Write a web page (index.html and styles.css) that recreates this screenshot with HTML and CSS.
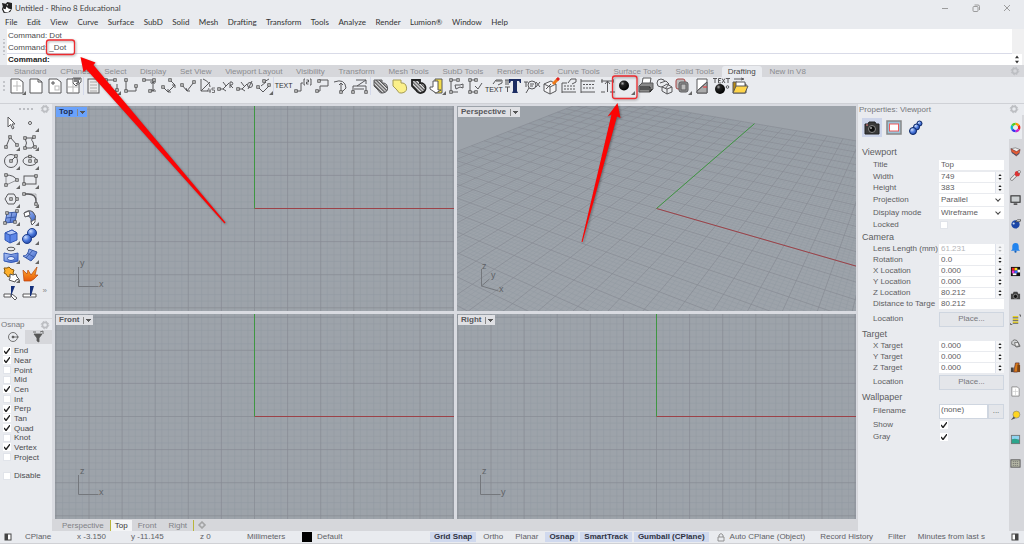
FILE: index.html
```html
<!DOCTYPE html>
<html lang="en">
<head>
<meta charset="utf-8">
<title>Untitled - Rhino 8 Educational</title>
<link rel="stylesheet" href="styles.css">
</head>
<body>
<svg class="defs" width="0" height="0" aria-hidden="true">
  <defs>
    <rect id="n" x="-1.2" y="-1.2" width="2.4" height="2.4" fill="#fff" stroke="#444" stroke-width=".9"/>
    <path id="c" d="M18 14v4h-4z" fill="#666" stroke="none"/>
    <g id="gear"><circle cx="5" cy="5" r="2.6" fill="none" stroke="#bcbec2" stroke-width="1.6"/><circle cx="5" cy="5" r="3.8" fill="none" stroke="#bcbec2" stroke-width="1" stroke-dasharray="1.5 1.5"/></g>
    <g id="spin"><path d="M3 4.2h4L5 1.6zM3 6.8h4L5 9.4z" fill="currentColor"/></g>
    <radialGradient id="ball" cx=".35" cy=".3" r=".7"><stop offset="0" stop-color="#aaa"/><stop offset=".3" stop-color="#222"/><stop offset="1" stop-color="#000"/></radialGradient>
    <radialGradient id="blue" cx=".35" cy=".3" r=".8"><stop offset="0" stop-color="#cfe0ff"/><stop offset=".5" stop-color="#4c79dc"/><stop offset="1" stop-color="#1a3f9e"/></radialGradient>
    <linearGradient id="bl" x2="1" y2="1"><stop offset="0" stop-color="#b4c9f8"/><stop offset="1" stop-color="#3560c8"/></linearGradient>
    <linearGradient id="fire" y2="1" x2="0"><stop offset="0" stop-color="#ffb52e"/><stop offset="1" stop-color="#e8590c"/></linearGradient>
    <pattern id="hatch" width="2.4" height="2.4" patternUnits="userSpaceOnUse" patternTransform="rotate(45)"><rect width="2.4" height="2.4" fill="#e4e4e6"/><path d="M0 1h2.4" stroke="#444" stroke-width="1.1"/></pattern>
  </defs>
</svg>

<header class="titlebar">
  <svg class="logo" viewBox="0 0 12 12"><path d="M1 1l4 1 2-2 5 1v6l-2 4-7 1-2-4 1-3z" fill="#222"/><path d="M2 7l3 1 1-3 2 2 3 1-3 3-4 0zM6 2l2 1-1 1z" fill="#fff"/></svg>
  <h1>Untitled - Rhino 8 Educational</h1>
  <div class="winbtns">
    <button aria-label="Minimize"><svg viewBox="0 0 10 10"><path d="M2 5.5h6"/></svg></button>
    <button aria-label="Restore"><svg viewBox="0 0 10 10"><rect x="2" y="3.5" width="5" height="5" rx="1"/><path d="M3.5 2h3.5q1.5 0 1.500 1.500V7"/></svg></button>
    <button aria-label="Close"><svg viewBox="0 0 10 10"><path d="M2 2l6 6M8 2L2 8"/></svg></button>
  </div>
</header>
<nav class="menu">
  <a href="#">File</a><a href="#">Edit</a><a href="#">View</a><a href="#">Curve</a><a href="#">Surface</a><a href="#">SubD</a><a href="#">Solid</a><a href="#">Mesh</a><a href="#">Drafting</a><a href="#">Transform</a><a href="#">Tools</a><a href="#">Analyze</a><a href="#">Render</a><a href="#">Lumion®</a><a href="#">Window</a><a href="#">Help</a>
</nav>

<section class="command">
  <div class="grip"></div>
  <div class="cmdbody">
    <div class="history"><p>Command: Dot</p><p>Command: _Dot</p></div>
    <div class="prompt"><label for="cmd">Command:</label><input id="cmd" type="text"></div>
  </div>
  <div class="cmdscroll"><svg viewBox="0 0 10 11"><use href="#spin"/></svg></div>
</section>

<nav class="tabs">
  <div class="tablist">
    <a href="#">Standard</a><a href="#">CPlanes</a><a href="#">Select</a><a href="#">Display</a><a href="#">Set View</a><a href="#">Viewport Layout</a><a href="#">Visibility</a><a href="#">Transform</a><a href="#">Mesh Tools</a><a href="#">SubD Tools</a><a href="#">Render Tools</a><a href="#">Curve Tools</a><a href="#">Surface Tools</a><a href="#">Solid Tools</a><a href="#" class="on">Drafting</a><a href="#">New in V8</a>
  </div>
  <svg class="gear" viewBox="0 0 10 10"><use href="#gear"/></svg>
</nav>

<div class="toolbar">
  <div class="grip"></div>
  <div class="group g1">
    <button aria-label="Layout views"><svg viewBox="0 0 18 18"><path d="M3 2h8l4 3v11H3z" fill="#fff"/><path d="M9 4v10M5 9h8" stroke="#bbb"/><use href="#c"/></svg></button>
    <button aria-label="New layout"><svg viewBox="0 0 18 18"><path d="M3 2h8l4 3v11H3z" fill="#fff"/><path d="M11 2v3h4"/></svg></button>
    <button aria-label="Add detail"><svg viewBox="0 0 18 18"><path d="M3 2h8l4 3v11H3z" fill="#fff"/><path d="M5 6h4M7 4v4"/><rect x="9" y="9" width="4" height="4" stroke="#bbb"/></svg></button>
    <button aria-label="Layout properties"><svg viewBox="0 0 18 18"><path d="M2 2h12v14H2z" fill="#fff"/><path d="M8 6v9M3 10h10" stroke="#bbb"/><path d="M8 1h8v4l-5 4-3-3z" fill="#fff"/><path d="M9 2h6M9 4h5M11 7l3-2" stroke-width="1.500"/></svg></button>
  </div>
  <div class="group g2">
    <button aria-label="Linetype"><svg viewBox="0 0 18 18"><rect x="4" y="2" width="11" height="14" fill="#ececec"/><path d="M6 5h7M6 8h7M6 11h7M6 14h7" stroke="#aaa"/></svg></button>
    <button aria-label="Dimension"><svg viewBox="0 0 18 18"><path d="M3 3h9M7 7v7h7V7"/><use href="#n" x="3" y="3"/><use href="#n" x="12" y="3"/><use href="#n" x="7" y="14"/><use href="#n" x="14" y="13"/><use href="#c"/></svg></button>
    <button aria-label="Ordinate dimension"><svg viewBox="0 0 18 18"><path d="M4 3v11h10V9"/><use href="#n" x="4" y="3"/><use href="#n" x="4" y="14"/><use href="#n" x="14" y="9"/></svg></button>
    <button aria-label="Horizontal dimension"><svg viewBox="0 0 18 18"><path d="M2 3h11M9 5h6M9 14h6M12 5v9M10.500 7L12 5l1.500 2M10.500 12l1.500 2 1.500-2"/><use href="#n" x="3" y="3"/><use href="#n" x="13" y="3"/><use href="#n" x="9" y="14"/></svg></button>
    <button aria-label="Aligned dimension"><svg viewBox="0 0 18 18"><path d="M10 3l5 5-7 7-5-5M12 8l3 0v3M8 12v3h3"/><use href="#n" x="10" y="3"/><use href="#n" x="3" y="10"/></svg></button>
    <button aria-label="Rotated dimension"><svg viewBox="0 0 18 18"><path d="M3 8l5 6 7-9M7 11l1 3h3"/><use href="#n" x="15" y="5"/><use href="#n" x="3" y="8"/></svg></button>
    <button aria-label="Angle dimension"><svg viewBox="0 0 18 18"><path d="M3 2v12h7M3 14L12 5M5 2q7 3 7 8"/><path d="M17 11h-3v2h2.500v2.500H14M11 11l-1.500 3H13M12 12v4" stroke-width=".8"/></svg></button>
    <button aria-label="Radius dimension"><svg viewBox="0 0 18 18"><path d="M2 12h4l6-6M6 5l3 4M6 12l3 2"/><path d="M13 11V5h2q1.500 1.500 0 3h-2l3 3"/><use href="#n" x="2" y="12"/></svg></button>
    <button aria-label="Diameter dimension"><svg viewBox="0 0 18 18"><path d="M2 12h4l5-5M5 5l3 4M6 12l3 2"/><circle cx="14" cy="8" r="2.500"/><path d="M12 12l4-8"/><use href="#n" x="2" y="12"/></svg></button>
    <button aria-label="Edit dimension"><svg viewBox="0 0 18 18"><path d="M3 10l5 5 7-7M9 5l5-3M6 9l5-4"/><use href="#n" x="3" y="10"/><use href="#n" x="9" y="4"/><use href="#n" x="14" y="8"/><use href="#c"/></svg></button>
  </div>
  <div class="group g3">
    <button aria-label="Text" class="txt">TEXT</button>
    <button aria-label="Leader"><svg viewBox="0 0 18 18"><path d="M2 14h5V6h2M11 2h-1v6h1M16 2h1v6h-1M12.500 3h2v2h-2v2h2"/><use href="#n" x="2" y="14"/></svg></button>
    <button aria-label="Annotation"><svg viewBox="0 0 18 18"><path d="M4 14h3V9h8V3H6v2"/><use href="#n" x="4" y="14"/><use href="#n" x="6" y="4"/></svg></button>
    <button aria-label="Arc dimension"><svg viewBox="0 0 18 18"><path d="M2 5q11-4 12 6l-4 4M9 6v9M7 8l2-2 2 2"/><use href="#n" x="9" y="15"/></svg></button>
    <button aria-label="Section"><svg viewBox="0 0 18 18"><path d="M2 15V9h13v6M5 3h10l-9 6M15 3v4M3 12h10"/><use href="#n" x="2" y="15"/><use href="#n" x="15" y="15"/></svg></button>
  </div>
  <div class="group g4">
    <button aria-label="Hatch"><svg viewBox="0 0 18 18"><path d="M3 3h8v3a5 5 0 1 1-4 7L3 9z" fill="url(#hatch)"/></svg></button>
    <button aria-label="Solid hatch"><svg viewBox="0 0 18 18"><path d="M3 3h8v3a5 5 0 1 1-4 7L3 9z" fill="#fbf08a" stroke="#a39a55"/></svg></button>
    <button aria-label="Hatch boundary"><svg viewBox="0 0 18 18"><path d="M3 3h8v3a5 5 0 1 1-4 7L3 9z" fill="url(#hatch)" stroke-width="1.800" stroke="#222"/></svg></button>
    <button aria-label="Make 2D"><svg viewBox="0 0 18 18"><path d="M7 2h7v14H7z" fill="#f3dc4a"/><path d="M2 10h3V4h5v9h3l-5 3-6-4z" fill="#fff"/><use href="#c"/></svg></button>
    <button aria-label="Match dimension"><svg viewBox="0 0 18 18"><path d="M3 3h6M3 15h8M4 3v12M8 8h5l3-1v4l-3-1-4 2z"/><use href="#n" x="4" y="3"/><use href="#n" x="4" y="15"/><use href="#n" x="11" y="3"/></svg></button>
    <button aria-label="Check dimension"><svg viewBox="0 0 18 18"><path d="M4 3v12h6M4 3h6"/><path d="M9 9l3 3 4-6"/><use href="#n" x="4" y="3"/><use href="#n" x="4" y="15"/><use href="#n" x="10" y="3"/><use href="#n" x="10" y="15"/></svg></button>
    <button aria-label="Edit text" class="txt low"><svg viewBox="0 0 18 8"><path d="M8 6l3-4h6v3l-4 2M11 3h5"/></svg>TEXT</button>
    <button aria-label="Text style"><svg viewBox="0 0 18 18"><path d="M5 2h12v4h-1l-1-2h-2v10l1 2H8l1-2V4H7L6 6H5z" fill="#1c2d63" stroke="none"/><path d="M1 3h4M2 3v5M4 3v5M1 10h5M3.500 10v5"/></svg></button>
    <button aria-label="Find text"><svg viewBox="0 0 18 18"><circle cx="9" cy="8" r="4"/><path d="M6 11l-3 5M1 5h4M3 5v5M13 5l4 5M17 5l-4 5M7 7h4M7 9h3"/></svg></button>
    <button aria-label="Edit block"><svg viewBox="0 0 18 18"><path d="M2 7l7-3 5 3v7l-6 3-6-3zM2 7l6 3v7M8 10l6-3M4 12l5-5" fill="#f4f4f6"/><path d="M11 7l5-5" stroke="#ee7a1a" stroke-width="3"/><path d="M15 3l2-2" stroke="#d22" stroke-width="3"/></svg></button>
    <button aria-label="Edit table"><svg viewBox="0 0 18 18"><path d="M2 6h5M8 6l3-4h5v3l-4 2M2 6v10M2 15h14"/><path d="M4 9h12M4 12h12" stroke-dasharray="2 1"/></svg></button>
    <button aria-label="Table"><svg viewBox="0 0 18 18"><path d="M2 2v14M2 4h14M2 15h14"/><path d="M4 7.500h12M4 11h12" stroke-dasharray="2 1"/></svg></button>
    <button aria-label="Centerline"><svg viewBox="0 0 18 18"><path d="M3 4h13M9.500 4v11M3 15h4M12 15h5M7 7l2.500-3L12 7M4 2v4M15 2v4"/></svg></button>
    <button aria-label="Dot"><svg viewBox="0 0 18 18"><circle cx="7" cy="8.500" r="5" fill="url(#ball)" stroke="none"/><use href="#c"/></svg></button>
    <button aria-label="Print"><svg viewBox="0 0 18 18"><path d="M6 7l1-6h8l-1 6" fill="#fff"/><path d="M3 9l3-3h11v6l-3 3H3z" fill="#888"/><path d="M4 10h10v5l2-3M4 12h9" stroke="#222"/></svg></button>
    <button aria-label="Projection"><svg viewBox="0 0 18 18"><circle cx="6" cy="6" r="4"/><path d="M5 6l6-2 3 3-4 5M7 10l5-3 5 3v5l-5 2-5-3zM7 10l5 2 5-2M12 12v5" fill="#e9ebee"/></svg></button>
    <button aria-label="Clipping"><svg viewBox="0 0 18 18"><rect x="2" y="2" width="9" height="10" rx="2" fill="#bbb" stroke="#a44"/><rect x="5" y="5" width="9" height="10" rx="2" fill="#999"/><rect x="7" y="7" width="5" height="6" fill="#bbb"/><use href="#c"/></svg></button>
    <button aria-label="Section style"><svg viewBox="0 0 18 18"><path d="M4 2h10v14H4z" fill="#fff"/><path d="M14 5v11H4v-2z" fill="#aaa"/><path d="M4 14L14 5"/><path d="M10 10h4" stroke="#e33"/></svg></button>
    <button aria-label="Dot text"><svg viewBox="0 0 18 18"><circle cx="8" cy="12" r="5" fill="url(#ball)" stroke="none"/><path d="M1 1.500h4M3 1.500V6M9 1.500H6.500V6H9M6.500 3.500h2M10 1.500L13 6M13 1.500L10 6M14 1.500h4M16 1.500V6"/><circle cx="15.500" cy="10" r="1.300"/></svg></button>
    <button aria-label="Import"><svg viewBox="0 0 18 18"><path d="M2 16V5h4l2 2h7v9z" fill="#b98a10"/><path d="M5 5h9v5H5z" fill="#fff"/><path d="M2 16l3-7h12l-3 7z" fill="#ffd54a"/><path d="M3 2h8M10 1l3 1-3 1"/></svg></button>
  </div>
</div>

<main class="work">
  <aside class="left">
    <section class="palette">
      <div class="phead"><span class="dots"></span><svg class="gear" viewBox="0 0 10 10"><use href="#gear"/></svg></div>
      <div class="tools">
        <button aria-label="Select"><svg viewBox="0 0 18 18"><path d="M6 3v10l2.500-2.500 2 4.500 1.500-1-2-4h3z" fill="#fff"/></svg></button>
        <button aria-label="Point"><svg viewBox="0 0 18 18"><circle cx="9" cy="9" r="1.500" fill="#fff"/><use href="#c"/></svg></button>
        <button aria-label="Polyline"><svg viewBox="0 0 18 18"><path d="M4 14L8 4l7 8"/><use href="#n" x="4" y="14"/><use href="#n" x="8" y="4"/><use href="#n" x="15" y="12"/><use href="#c"/></svg></button>
        <button aria-label="Curve"><svg viewBox="0 0 18 18"><path d="M4 5h9M13 4q-4 2-1 5 2 4-1 6H4q3-5 0-10"/><use href="#n" x="4" y="5"/><use href="#n" x="13" y="4"/><use href="#n" x="4" y="15"/><use href="#n" x="14" y="14"/><use href="#c"/></svg></button>
        <button aria-label="Circle"><svg viewBox="0 0 18 18"><circle cx="9" cy="9" r="6.500"/><path d="M9 9l4-4"/><use href="#n" x="9" y="9"/><use href="#n" x="14" y="4"/><use href="#c"/></svg></button>
        <button aria-label="Ellipse"><svg viewBox="0 0 18 18"><ellipse cx="9" cy="9" rx="7" ry="4.500"/><use href="#n" x="9" y="9"/><use href="#n" x="9" y="4.500"/><use href="#n" x="15" y="9"/><use href="#c"/></svg></button>
        <button aria-label="Arc"><svg viewBox="0 0 18 18"><path d="M4 4q8 0 11 5" /><path d="M4 4v10l11-5" stroke-width=".6"/><use href="#n" x="4" y="4"/><use href="#n" x="4" y="14"/><use href="#n" x="15" y="9"/><use href="#c"/></svg></button>
        <button aria-label="Rectangle"><svg viewBox="0 0 18 18"><rect x="3" y="5" width="12" height="8"/><use href="#n" x="15" y="5"/><use href="#n" x="3" y="13"/><use href="#c"/></svg></button>
        <button aria-label="Polygon"><svg viewBox="0 0 18 18"><path d="M6 4h6l3 5-3 5H6L3 9z"/><use href="#n" x="9" y="9"/><use href="#n" x="15" y="9"/><use href="#c"/></svg></button>
        <button aria-label="Fillet"><svg viewBox="0 0 18 18"><path d="M3 4h4q8 0 8 7v4" stroke-width="1.300"/><path d="M3 4h12v8" stroke-width=".4"/><use href="#n" x="3" y="4"/><use href="#n" x="15" y="14"/><use href="#c"/></svg></button>
        <button aria-label="Surface from points"><svg viewBox="0 0 18 18"><path d="M5 5l10-1-2 10-10 1z" fill="url(#bl)" stroke="#3a5aa8"/><path d="M10 4L8 15M4 10l10-1" stroke="#3a5aa8"/><use href="#n" x="5" y="5"/><use href="#n" x="15" y="3"/><use href="#n" x="13" y="14"/><use href="#n" x="3" y="15"/><use href="#c"/></svg></button>
        <button aria-label="Sweep surface"><svg viewBox="0 0 18 18"><path d="M3 5q5-4 9-1 4 4 2 8l-4 2q1-6-5-6z" fill="url(#bl)"/><path d="M3 5l5-2 1 4-5 2zM10 14l4-3v3l-3 3z" fill="#fff"/><use href="#c"/></svg></button>
        <button aria-label="Box"><svg viewBox="0 0 18 18"><path d="M3 6l7-3 5 3v7l-7 3-5-3z" fill="#5c86e8" stroke="#3358b4"/><path d="M3 6l7-3 5 3-7 2z" fill="#b8ccf9" stroke="#3358b4"/><path d="M8 8v8" stroke="#3358b4"/><use href="#c"/></svg></button>
        <button aria-label="Boolean union"><svg viewBox="0 0 18 18"><circle cx="11" cy="6" r="4.500" fill="url(#blue)" stroke="#1c3c8c"/><circle cx="6" cy="12" r="4.500" fill="url(#blue)" stroke="#1c3c8c"/><use href="#c"/></svg></button>
        <button aria-label="Project"><svg viewBox="0 0 18 18"><ellipse cx="9" cy="3" rx="4" ry="1.800"/><path d="M2 7q7 3 14 0v8q-7 3-14 0z" fill="url(#bl)" stroke="#3358b4"/><ellipse cx="9" cy="12.500" rx="3.500" ry="2" fill="#e4ecff" stroke="#3358b4"/><use href="#c"/></svg></button>
        <button aria-label="Mesh"><svg viewBox="0 0 18 18"><path d="M2 10q5 0 6-7l8 3q-2 6-6 9z" fill="url(#bl)" stroke="#3a5aa8"/><path d="M6 7l7 4M5 12l7-8" stroke="#3a5aa8"/><use href="#c"/></svg></button>
        <button aria-label="Join"><svg viewBox="0 0 18 18"><path d="M2 3h3l2-1 2 2 3 1-1 3 1 2-4 1-2 1-2-3-2-1 1-2z" fill="#ffb02a" stroke="#84570c"/><path d="M8 9l3 1 3-1 1 3 2 2-3 1-1 2-3-1-3-1 1-2z" fill="#fff" stroke="#555"/><use href="#c"/></svg></button>
        <button aria-label="Explode"><svg viewBox="0 0 18 18"><path d="M3 16L2 5l4 4 1-4 3 5 6-8-2 8 3 0-4 4-3 2z" fill="url(#fire)" stroke="#b8440c" stroke-width=".7"/></svg></button>
        <button aria-label="Trim"><svg viewBox="0 0 18 18"><path d="M2 10h7v3H2zM10 10l5 4-2 2-4-4z" fill="#fff"/><path d="M9 2h4l-4 10z" fill="#14307c" stroke="none"/></svg></button>
        <button aria-label="Split"><svg viewBox="0 0 18 18"><path d="M2 10h13v3H2z" fill="#fff"/><path d="M9 2h4l-3 10H9z" fill="#14307c" stroke="none"/></svg></button>
      </div>
      <span class="more">»</span>
    </section>
    <section class="osnap">
      <div class="ohead"><h2>Osnap</h2><svg class="gear" viewBox="0 0 10 10"><use href="#gear"/></svg></div>
      <div class="otabs">
        <button class="on" aria-label="Snaps"><svg viewBox="0 0 18 14"><circle cx="9" cy="7" r="4.500"/><path d="M9 7h6"/><circle cx="9" cy="7" r="1" fill="#555"/></svg></button>
        <button aria-label="Filter"><svg viewBox="0 0 18 14"><path d="M5 4h8l-3 4v4l-2-1V8z" fill="#555"/><path d="M4 2h3M11 2l3-1v3"/></svg></button>
      </div>
      <div class="checks">
        <label><input type="checkbox" checked>End</label>
        <label><input type="checkbox" checked>Near</label>
        <label><input type="checkbox">Point</label>
        <label><input type="checkbox">Mid</label>
        <label><input type="checkbox" checked>Cen</label>
        <label><input type="checkbox">Int</label>
        <label><input type="checkbox" checked>Perp</label>
        <label><input type="checkbox" checked>Tan</label>
        <label><input type="checkbox" checked>Quad</label>
        <label><input type="checkbox">Knot</label>
        <label><input type="checkbox" checked>Vertex</label>
        <label><input type="checkbox">Project</label>
      </div>
      <div class="disable"><label><input type="checkbox">Disable</label></div>
    </section>
  </aside>

  <section class="center">
    <div class="views">
      <div class="view">
        <svg class="scene" data-kind="plan" viewBox="0 0 399 205" preserveAspectRatio="xMidYMid slice"></svg>
        <svg class="axes" viewBox="0 0 60 50"><path d="M23.500 24v19.500h20"/><text x="25" y="23">y</text><text x="44" y="44">x</text></svg>
        <button class="vname on">Top<i></i></button>
      </div>
      <div class="view">
        <svg class="scene" data-kind="persp" viewBox="0 0 399 205" preserveAspectRatio="xMidYMid slice"></svg>
        <svg class="axes" viewBox="0 0 60 50"><path d="M24.500 26v17l17 5M24.500 43l8-7"/><text x="25" y="26">z</text><text x="34" y="35">y</text><text x="42" y="49">x</text></svg>
        <button class="vname">Perspective<i></i></button>
      </div>
      <div class="view">
        <svg class="scene" data-kind="plan" viewBox="0 0 399 205" preserveAspectRatio="xMidYMid slice"></svg>
        <svg class="axes" viewBox="0 0 60 50"><path d="M23.500 24v19.500h20"/><text x="25" y="23">z</text><text x="44" y="44">x</text></svg>
        <button class="vname">Front<i></i></button>
      </div>
      <div class="view">
        <svg class="scene" data-kind="plan" viewBox="0 0 399 205" preserveAspectRatio="xMidYMid slice"></svg>
        <svg class="axes" viewBox="0 0 60 50"><path d="M23.500 24v19.500h20"/><text x="25" y="23">z</text><text x="44" y="44">y</text></svg>
        <button class="vname">Right<i></i></button>
      </div>
    </div>
    <nav class="vtabs"><a href="#" class="first">Perspective</a><a href="#" class="on">Top</a><a href="#">Front</a><a href="#" class="last">Right</a><button aria-label="Add page"><svg viewBox="0 0 10 10"><path d="M4 2h2v2h2v2H6v2H4V6H2V4h2z" fill="none" stroke="#888" stroke-width=".8"/></svg></button></nav>
  </section>

  <aside class="right">
    <form class="props">
      <div class="prhead"><h2>Properties: Viewport</h2></div>
      <div class="ptabs">
        <button type="button" class="on" aria-label="Viewport"><svg viewBox="0 0 18 18"><path d="M2 5h3l1-2h6l1 2h3v10H2z" fill="#3a3a3a" stroke="#222"/><circle cx="9" cy="10" r="3.500" fill="#111" stroke="#888"/><path d="M3 6h2" stroke="#e88"/><circle cx="8" cy="9" r="1" fill="#aaa" stroke="none"/></svg></button>
        <button type="button" aria-label="Detail"><svg viewBox="0 0 18 18"><rect x="2" y="2" width="14" height="13" fill="#9cc4d8" stroke="#888" stroke-width="1.500"/><rect x="4.500" y="5" width="9" height="7" fill="#fff" stroke="#f05a5a"/></svg></button>
        <button type="button" aria-label="Material"><svg viewBox="0 0 18 18"><circle cx="12.500" cy="4.500" r="2.500" fill="url(#blue)" stroke="#0c2766"/><circle cx="9.500" cy="8" r="3" fill="url(#blue)" stroke="#0c2766"/><circle cx="6" cy="12" r="3.500" fill="url(#blue)" stroke="#0c2766"/></svg></button>
      </div>
      <h3 class="first">Viewport</h3>
      <div class="row r12"><label for="f1">Title</label><input id="f1" value="Top"></div>
      <div class="row"><label for="f2">Width</label><span class="num"><input id="f2" value="749"><svg viewBox="0 0 10 11"><use href="#spin"/></svg></span></div>
      <div class="row"><label for="f3">Height</label><span class="num"><input id="f3" value="383"><svg viewBox="0 0 10 11"><use href="#spin"/></svg></span></div>
      <div class="row r13"><label for="f4">Projection</label><span class="sel"><select id="f4"><option>Parallel</option></select></span></div>
      <div class="row r13"><label for="f5">Display mode</label><span class="sel"><select id="f5"><option>Wireframe</option></select></span></div>
      <div class="row r12"><label for="f6">Locked</label><input id="f6" type="checkbox"></div>
      <h3>Camera</h3>
      <div class="row off"><label for="f7">Lens Length (mm)</label><span class="num"><input id="f7" value="61.231" disabled><svg viewBox="0 0 10 11"><use href="#spin"/></svg></span></div>
      <div class="row"><label for="f8">Rotation</label><span class="num"><input id="f8" value="0.0"><svg viewBox="0 0 10 11"><use href="#spin"/></svg></span></div>
      <div class="row"><label for="f9">X Location</label><span class="num"><input id="f9" value="0.000"><svg viewBox="0 0 10 11"><use href="#spin"/></svg></span></div>
      <div class="row"><label for="f10">Y Location</label><span class="num"><input id="f10" value="0.000"><svg viewBox="0 0 10 11"><use href="#spin"/></svg></span></div>
      <div class="row"><label for="f11">Z Location</label><span class="num"><input id="f11" value="80.212"><svg viewBox="0 0 10 11"><use href="#spin"/></svg></span></div>
      <div class="row r12"><label for="f12">Distance to Targe</label><input id="f12" value="80.212"></div>
      <div class="row r18"><label for="f13">Location</label><button type="button" id="f13">Place...</button></div>
      <h3>Target</h3>
      <div class="row"><label for="f14">X Target</label><span class="num"><input id="f14" value="0.000"><svg viewBox="0 0 10 11"><use href="#spin"/></svg></span></div>
      <div class="row"><label for="f15">Y Target</label><span class="num"><input id="f15" value="0.000"><svg viewBox="0 0 10 11"><use href="#spin"/></svg></span></div>
      <div class="row"><label for="f16">Z Target</label><span class="num"><input id="f16" value="0.000"><svg viewBox="0 0 10 11"><use href="#spin"/></svg></span></div>
      <div class="row r18"><label for="f17">Location</label><button type="button" id="f17">Place...</button></div>
      <h3>Wallpaper</h3>
      <div class="row r16"><label for="f18">Filename</label><span class="file"><input id="f18" value="(none)"><button type="button" aria-label="Browse">...</button></span></div>
      <div class="row r12"><label for="f19">Show</label><input id="f19" type="checkbox" checked></div>
      <div class="row r12"><label for="f20">Gray</label><input id="f20" type="checkbox" checked></div>
    </form>
    <div class="strip">
      <div class="sthead"><svg class="gear" viewBox="0 0 10 10"><use href="#gear"/></svg></div>
      <button class="on" aria-label="Properties"><svg viewBox="0 0 12 12"><g fill="none" stroke-width="2.500"><path d="M6 2A4 4 0 0 1 9.500 4" stroke="#f90"/><path d="M9.500 4A4 4 0 0 1 9.500 8" stroke="#e22"/><path d="M9.500 8A4 4 0 0 1 6 10" stroke="#c2c"/><path d="M6 10A4 4 0 0 1 2.500 8" stroke="#33e"/><path d="M2.500 8A4 4 0 0 1 2.500 4" stroke="#1bc"/><path d="M2.500 4A4 4 0 0 1 6 2" stroke="#5c2"/></g></svg></button>
      <button aria-label="Layers"><svg viewBox="0 0 12 12"><path d="M1 3l5-1 5 2-4 3z" fill="#eee" stroke="#555" stroke-width=".6"/><path d="M1 3l6 3 4-2-1 4-3 3-5-4z" fill="#e05a34" stroke="#733" stroke-width=".6"/><path d="M2 7l5 3 3-2" stroke="#357" fill="none"/></svg></button>
      <button aria-label="Materials"><svg viewBox="0 0 12 12"><path d="M2 10l6-6" stroke="#777" stroke-width="3.500" stroke-linecap="round"/><path d="M2 10l6-6" stroke="#eee" stroke-width="2" stroke-linecap="round"/><circle cx="8" cy="4" r="2.800" fill="#d33"/><circle cx="10" cy="2" r="1.500" fill="#eee" stroke="#555" stroke-width=".6"/></svg></button>
      <button aria-label="Display"><svg viewBox="0 0 12 12"><rect x="1" y="2" width="10" height="7" fill="#ccd0d2" stroke="#333" stroke-width="1.200"/><path d="M4 11h4" stroke="#333" stroke-width="1.500"/></svg></button>
      <button aria-label="Rendering"><svg viewBox="0 0 12 12"><circle cx="6" cy="7" r="4.500" fill="#1b46a8"/><path d="M6 4h5l1-2H8z" fill="#eee" stroke="#222" stroke-width=".7"/><circle cx="4" cy="6" r="1.200" fill="#cde"/></svg></button>
      <button aria-label="Notifications"><svg viewBox="0 0 12 12"><path d="M6 1q3.500 0 3.500 4v3l1.500 1.500H1L2.500 8V5Q2.500 1 6 1z" fill="#2384ee"/><circle cx="6" cy="10.500" r="1.200" fill="#1560b8"/></svg></button>
      <button aria-label="Texture"><svg viewBox="0 0 12 12"><rect x="1" y="1" width="10" height="10" fill="#111"/><path d="M2 2h3v3H2z" fill="#e22"/><path d="M5 2h3v3H5z" fill="#fd2"/><path d="M8 4h3v3H8z" fill="#fff"/><path d="M2 5h3v3H2z" fill="#e3c"/><path d="M5 5h3v3H5z" fill="#36f"/><path d="M3 8h4v2H3z" fill="#fff"/></svg></button>
      <button aria-label="Named views"><svg viewBox="0 0 12 12"><path d="M1 4h2l1-2h4l1 2h2v6H1z" fill="#444"/><circle cx="6" cy="7" r="2.300" fill="#111" stroke="#aaa" stroke-width=".7"/></svg></button>
      <button aria-label="Outline"><svg viewBox="0 0 12 12"><path d="M3 3h6M3 6h6M3 9h6" stroke="#e8d224" stroke-width="1.500"/><path d="M3 4.200h6M3 7.200h6M3 10.200h6M10 1h1.500v2M.5 10v1.500h2" stroke="#444" stroke-width=".8" fill="none"/></svg></button>
      <button aria-label="Blocks"><svg viewBox="0 0 12 12"><path d="M2 7q-1-4 3-5 3 0 4 3l2 4-4 1-2-2z" fill="#d0d2d4" stroke="#555" stroke-width=".8"/><path d="M5 5l4 0 1 4-4 0z" fill="#eee" stroke="#555" stroke-width=".8"/></svg></button>
      <button aria-label="Libraries"><svg viewBox="0 0 12 12"><path d="M1 6h3v5H1z" fill="#444"/><path d="M4 11L6 1h4l-2 10z" fill="#d87a1a" stroke="#522" stroke-width=".7"/><path d="M8 3h3v8H8z" fill="#7a4416"/></svg></button>
      <button aria-label="Layouts"><svg viewBox="0 0 12 12"><path d="M2 1h6l2 2v8H2z" fill="#fff" stroke="#777" stroke-width=".8"/><path d="M6 3v7M3 6h6" stroke="#ccc" stroke-width=".7"/></svg></button>
      <button aria-label="Lights"><svg viewBox="0 0 12 12"><circle cx="7" cy="5" r="3.800" fill="#ffd51f" stroke="#777" stroke-width=".6"/><path d="M1 11l3-4 2 2z" fill="#555"/></svg></button>
      <button aria-label="Environments"><svg viewBox="0 0 12 12"><rect x="1" y="1" width="10" height="10" fill="#777"/><path d="M2 2h8v4H2z" fill="#8fd4f0"/><path d="M2 6q4-2 8 1v3H2z" fill="#2ba58c"/></svg></button>
      <button aria-label="Calculator"><svg viewBox="0 0 12 12"><rect x="1" y="2" width="10" height="8" fill="#b8baa8" stroke="#555"/><path d="M3 4h6M3 6h6M3 8h6" stroke="#666" stroke-width=".8" stroke-dasharray="1.500 .7"/></svg></button>
    </div>
  </aside>
</main>

<footer class="status">
  <button class="side" aria-label="Toggle left sidebar"><svg viewBox="0 0 10 10"><rect x="2" y="2" width="6" height="6" fill="#fff" stroke="#444"/><path d="M2 2h3v6H2z" fill="#444"/></svg></button>
  <span class="s1">CPlane</span><span class="s2">x -3.150</span><span class="s3">y -11.145</span><span class="s4">z 0</span><span class="s5">Millimeters</span><span class="s6"><i></i>Default</span>
  <div class="modes">
    <button class="on">Grid Snap</button><button>Ortho</button><button>Planar</button><button class="on">Osnap</button><button class="on">SmartTrack</button><button class="on">Gumball (CPlane)</button>
    <button class="auto"><svg viewBox="0 0 10 10"><path d="M3 5V3q2-3 4 0v2M2 5h6v4H2z" fill="none" stroke="#888" stroke-width=".9"/></svg>Auto CPlane (Object)</button><button class="rec">Record History</button><button>Filter</button>
  </div>
  <span class="mins">Minutes from last s</span>
  <button class="side" aria-label="Toggle right sidebar"><svg viewBox="0 0 10 10"><rect x="2" y="2" width="6" height="6" fill="#fff" stroke="#444"/><path d="M5 2h3v6H5z" fill="#444"/></svg></button>
</footer>

<svg class="notes" viewBox="0 0 1024 544" preserveAspectRatio="xMinYMin meet" aria-hidden="true">
  <rect x="46.500" y="40" width="28" height="14.500" rx="2.500"/>
  <rect x="612.500" y="76" width="24.500" height="22.500" rx="2.500"/>
  <path d="M80.500 57L95.500 62.500 93.500 65 225.500 222.500 224.500 223.500 86.500 69.500 83.500 72z"/>
  <path d="M617.500 103L620.500 118 617 116.500 582.500 242 581.500 242 611.500 114.500 607.500 116.500z"/>
</svg>
<script src="scene.js"></script>
</body>
</html>
```
FILE: styles.css
```css
* { box-sizing: border-box; }
html, body { height: 100%; }
body {
  margin: 0;
  display: flex;
  flex-direction: column;
  position: relative;
  overflow: hidden;
  background: #e9ebef;
  color: #4a4a4c;
  font: 8px/10px "Liberation Sans", Arial, sans-serif;
}
h1, h2, h3, p { margin: 0; font: inherit; }
a { color: inherit; text-decoration: none; }
button, input, select { font: inherit; color: inherit; margin: 0; padding: 0; border: 0; background: none; min-width: 0; border-radius: 0; }
button { display: flex; align-items: center; justify-content: center; }
.defs { position: absolute; }
.gear { width: 10px; height: 10px; flex: none; }

.titlebar { display: flex; align-items: center; height: 15px; flex: none; padding-left: 1px; gap: 3px; font: 8px/12px Lato, "Noto Sans", sans-serif; color: #444; }
.logo { width: 11px; height: 11px; }
.winbtns { margin-left: auto; display: flex; gap: 11px; padding-right: 7px; }
.winbtns button { width: 20px; height: 14px; }
.winbtns svg { width: 10px; height: 10px; fill: none; stroke: #888; stroke-width: 0.8; }

.menu { display: flex; height: 14px; flex: none; align-items: center; justify-content: space-between; max-width: 513px; padding: 0 5px; font: 8px/12px Lato, "Noto Sans", sans-serif; color: #333; }

.grip { width: 7px; flex: none; background: radial-gradient(circle, #c3c5ca 1px, transparent 1px) center / 4px 4px repeat-y; background-clip: content-box; padding: 10px 0; }
.command { display: flex; flex: none; height: 36px; }
.cmdbody { flex: 1; background: #fff; display: flex; flex-direction: column; }
.history { height: 25px; border-bottom: 1px solid #d9dbe8; padding: 1px 0 0 1px; line-height: 12px; }
.prompt { display: flex; flex: 1; padding-left: 1px; line-height: 11px; }
.prompt label { font-weight: bold; color: #222; }
.prompt input { flex: 1; outline: 0; }
.cmdscroll { width: 12px; flex: none; background: #f0f0f1; display: flex; align-items: flex-end; }
.cmdscroll svg { width: 10px; height: 11px; background: #fff; color: #333; }

.tabs { display: flex; flex: none; height: 12px; align-items: center; justify-content: space-between; background: #d6d7db; color: #8b8c90; padding: 0 4px 0 8px; }
.tablist { display: flex; flex: 1; max-width: 804px; justify-content: space-between; height: 11px; align-self: flex-end; }
.tablist a { padding: 0 6px; line-height: 12px; white-space: nowrap; }
.tablist .on { background: #e9ebef; color: #444; border-radius: 3px 3px 0 0; }

.toolbar { display: flex; flex: none; height: 27px; padding-bottom: 8px; border-bottom: 1px solid #cfd1d6; }
.toolbar .grip { padding: 3px 0; }
.group { display: grid; grid-auto-flow: column; grid-auto-columns: 1fr; }
.g1 { width: 77px; border-right: 1px solid #d4d9ea; }
.g2 { width: 190px; border-right: 1px solid #d4d9ea; }
.g3 { width: 97px; border-right: 1px solid #d4d9ea; }
.g4 { width: 378px; }
.group svg, .tools svg { width: 18px; height: 18px; fill: none; stroke: #58585b; stroke-width: 1; flex: none; }
.group .txt { font-size: 7px; line-height: 8px; color: #333; }
.group .low { flex-direction: column; }
.group .low svg { height: 8px; }

.work { flex: 1; min-height: 0; display: flex; background: #d6d7db; }
.left { width: 52px; flex: none; display: flex; flex-direction: column; gap: 1px; }
.palette { height: 214px; background: #e9ebef; position: relative; padding-left: 1px; }
.phead { display: flex; justify-content: flex-end; align-items: center; gap: 6px; height: 10px; padding-right: 2px; }
.dots { width: 16px; height: 2px; background: radial-gradient(circle, #bbbdc2 1px, transparent 1px) 0 0 / 4px 2px; }
.tools { display: grid; grid-template-columns: 19px 19px; grid-auto-rows: 1fr; height: 188px; }
.more { position: absolute; right: 5px; top: 182px; color: #888; }
.osnap { flex: 1; background: #e9ebef; }
.ohead { display: flex; align-items: center; justify-content: space-between; height: 11px; padding: 0 2px 0 1px; color: #77787c; }
.otabs { display: flex; height: 14px; background: #d6d7db; }
.otabs button { width: 25px; height: 14px; }
.otabs .on { background: #e9ebef; }
.otabs svg { width: 18px; height: 14px; fill: none; stroke: #555; stroke-width: 0.8; }
.checks { display: grid; grid-auto-rows: 1fr; height: 116px; margin-top: 2px; padding-left: 3px; line-height: 9px; }
.checks label, .disable label { display: flex; align-items: center; gap: 3px; }
.disable { margin-top: 9px; padding-left: 3px; }
input[type="checkbox"] { appearance: none; width: 8px; height: 8px; background: #fff; border: 1px solid #e1e4ea; flex: none; }
input[type="checkbox"]:checked { border-color: #fff; background: #fff url("data:image/svg+xml,%3Csvg xmlns='http://www.w3.org/2000/svg' viewBox='0 0 8 8'%3E%3Cpath d='M1 4l2 2.500L7 1.200' fill='none' stroke='%23222' stroke-width='1.400'/%3E%3C/svg%3E") center / 8px 8px no-repeat; }

.center { flex: 1; min-width: 0; display: flex; flex-direction: column; }
.views { flex: 1; min-height: 0; display: grid; grid-template: 1fr 1fr / 1fr 1fr; gap: 3px; padding: 2px 1px 0 3px; background: #d9dbe1; }
.view { position: relative; overflow: hidden; background: #9da3aa; min-height: 0; }
.scene { position: absolute; inset: 0; width: 100%; height: 100%; fill: none; }
.minor { stroke: #939aa2; stroke-width: 0.5; }
.major { stroke: #878b93; stroke-width: 0.7; }
.xaxis { stroke: #9c4248; stroke-width: 1; }
.yaxis { stroke: #3f9642; stroke-width: 1; }
.axes { position: absolute; left: 0; bottom: 18px; width: 60px; height: 50px; overflow: visible; }
.axes path { fill: none; stroke: #74777c; stroke-width: 1; }
.axes text { font-size: 9px; fill: #5f6266; }
.vname { position: absolute; left: 1px; top: 1px; height: 10px; padding: 0 2px 0 3px; gap: 4px; background: #dfe0e4; color: #55565a; font-weight: bold; }
.vname i { border-left: 1px solid #888; height: 7px; width: 8px; display: block; background: linear-gradient(#555, #555) 2px 2px / 5px 1px no-repeat, linear-gradient(#555, #555) 3px 3px / 3px 1px no-repeat, linear-gradient(#555, #555) 4px 4px / 1px 1px no-repeat; }
.vname.on { background: #6aa2fb; color: #1c2c50; }
.vtabs { display: flex; height: 12px; flex: none; align-items: center; padding-left: 4px; color: #808186; }
.vtabs a { padding: 0 6px; line-height: 12px; height: 11px; }
.vtabs .first, .vtabs .last { border-right: 1px solid #b9b53a; }
.vtabs .on { background: #f3f4f6; color: #333; padding: 0 4px; }
.vtabs button { margin-left: 3px; }
.vtabs svg { width: 10px; height: 10px; }

.right { width: 167px; flex: none; display: flex; }
.props { flex: 1; min-width: 0; background: #e9ebef; padding: 0 5px 0 5px; margin-left: 1px; color: #5d5d61; }
.prhead { height: 12px; line-height: 12px; margin-left: -4px; color: #77787c; }
.ptabs { display: flex; gap: 2px; height: 20px; margin: 2px 0 7px -1px; }
.ptabs button { width: 20px; height: 19px; }
.ptabs .on { background: #cdd5ea; }
.ptabs svg { width: 18px; height: 18px; fill: none; }
.props h3 { font-size: 9px; line-height: 12px; height: 12px; margin-left: -1px; }
.props h3.first { height: 14px; line-height: 14px; }
.row { display: grid; grid-template-columns: 1fr 65px; height: 11px; align-items: center; padding-left: 10px; }
.row label { white-space: nowrap; }
.r12 { height: 12px; }
.r13 { height: 13px; }
.r16 { height: 16px; }
.r18 { height: 18px; }
.row > input:not([type="checkbox"]), .num, .sel { height: 10px; background: #fff; width: 100%; padding-left: 2px; }
.r13 .sel { height: 12px; }
.num { display: flex; }
.num input { flex: 1; }
.num svg { width: 9px; height: 10px; border-left: 1px solid #dfe3ec; background: #f4f5f7; color: #222; flex: none; }
.off input, .off svg { color: #b5b6b9; }
.sel { display: flex; position: relative; }
.sel select { flex: 1; appearance: none; outline: 0; }
.sel::after { content: ""; position: absolute; right: 4px; top: 3px; width: 3px; height: 3px; border: solid #444; border-width: 0 1px 1px 0; transform: rotate(45deg); }
.row > button { height: 15px; border: 1px solid #cfd6e0; background: #e4e6ea; color: #77787c; width: 100%; }
.file { display: flex; height: 15px; }
.file input { flex: 1; background: #fff; border: 1px solid #cfd6e0; padding: 0 0 3px 1px; }
.file button { width: 16px; border: 1px solid #cfd6e0; background: #e4e6ea; }
.row input[type="checkbox"] { margin-left: 1px; }
.strip { width: 15px; flex: none; display: flex; flex-direction: column; }
.sthead { height: 11px; background: #e9ebef; }
.strip button { height: 24px; width: 13px; }
.strip .on { background: #e9ebef; }
.strip button svg { width: 11px; height: 11px; flex: none; }

.status { display: flex; align-items: center; height: 13px; flex: none; padding: 0 4px 0 3px; border-bottom: 1px solid #d0d1d5; color: #606166; white-space: nowrap; }
.side { width: 10px; }
.side svg { width: 10px; height: 10px; }
.s1 { width: 52px; margin-left: 12px; }
.s2 { width: 54px; }
.s3 { width: 69px; }
.s4 { width: 47px; }
.s5 { width: 55px; }
.s6 { display: flex; gap: 5px; }
.s6 i { width: 10px; height: 10px; background: #000; }
.modes { display: flex; margin-left: auto; gap: 2px; }
.modes button { padding: 0 5px; height: 10px; }
.modes .on { background: #d0d9ee; color: #2e3242; font-weight: bold; padding: 0 4px; }
.modes svg { width: 10px; height: 10px; }
.modes .auto { gap: 4px; padding-right: 8px; }
.modes .rec { padding-right: 8px; }
.mins { margin: 0 25px 0 7px; }

.notes { position: absolute; left: 0; top: 0; width: 1024px; height: 544px; pointer-events: none; filter: drop-shadow(1px 1px 1px rgba(0, 0, 0, 0.35)); }
.notes rect { fill: none; stroke: #ee2b2f; stroke-width: 1.3; }
.notes path { fill: #fb0404; }
```
FILE: scene.js
```js
const NS = "http://www.w3.org/2000/svg";
const CX = 199.5, CY = 102.5;

function add(svg, cls, d) {
  const p = document.createElementNS(NS, "path");
  p.setAttribute("class", cls);
  p.setAttribute("d", d);
  svg.append(p);
}

// Five grid units between major lines, 33px apart in the parallel views.
const plan = (x, y) => [CX + x * 6.62, CY - y * 6.62];

// Camera pitched 30 degrees and turned 30 degrees, 100 units from the origin.
function persp(x, y) {
  const w = 100 - 0.433 * x + 0.75 * y;
  return [CX + 427 * (0.866 * x + 0.5 * y) / w, CY - 427 * (-0.25 * x + 0.433 * y) / w];
}

function line(project, a, b) {
  const f = p => project(...p).map(v => v.toFixed(2)).join(" ");
  return "M" + f(a) + "L" + f(b);
}

document.querySelectorAll(".scene").forEach(svg => {
  const project = svg.dataset.kind === "persp" ? persp : plan;
  let minor = "", major = "";
  for (let i = -70; i <= 70; i++) {
    const d = line(project, [i, -70], [i, 70]) + line(project, [-70, i], [70, i]);
    if (i % 5) minor += d; else major += d;
  }
  add(svg, "minor", minor);
  add(svg, "major", major);
  add(svg, "xaxis", line(project, [0, 0], [70, 0]));
  add(svg, "yaxis", line(project, [0, 0], [0, 70]));
});
```
